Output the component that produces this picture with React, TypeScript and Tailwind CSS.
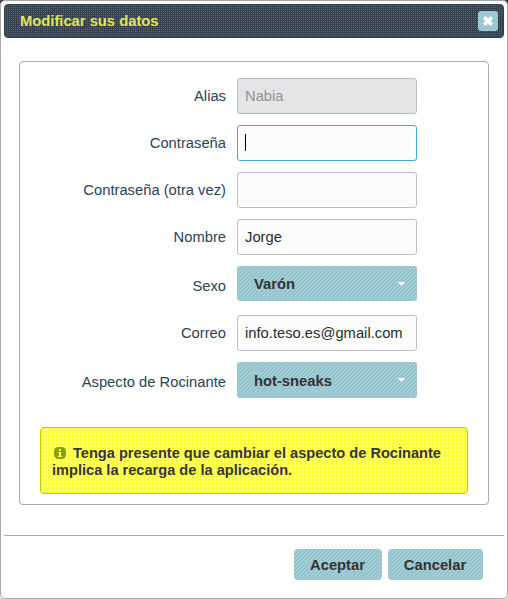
import type { ReactNode } from "react";

const STRIPES =
  "bg-[#93c3cd] bg-[linear-gradient(135deg,#93c3cd_44%,#b3d6dd_44%,#b3d6dd_56%,#93c3cd_56%)] bg-size-[4px_4px]";

function Row({
  label,
  className,
  labelClass = "",
  children,
}: {
  label: string;
  className: string;
  labelClass?: string;
  children: ReactNode;
}) {
  return (
    <div className={`flex items-center ${className}`}>
      <label className={`mr-[11px] w-[206px] shrink-0 text-right whitespace-nowrap text-[#2c4359] ${labelClass}`}>
        {label}
      </label>
      {children}
    </div>
  );
}

function Field({ value, kind = "normal" }: { value: string; kind?: "normal" | "disabled" | "focus" }) {
  const look =
    kind === "disabled"
      ? "border-[#b9bec2] bg-[#e4e5e7] text-[#929394]"
      : kind === "focus"
        ? "border-[#3baae3] bg-[#fcfcfc] text-[#2c2c2c]"
        : "border-[#bfbfbf] bg-[#fcfcfc] text-[#2c2c2c]";
  return (
    <div className={`flex h-9 w-[180px] items-center rounded-[3px] border pl-[7px] whitespace-nowrap ${look}`}>
      {kind === "focus" ? <span className="mb-px h-[17px] w-px bg-black" /> : value}
    </div>
  );
}

function Select({ value, className, textClass }: { value: string; className: string; textClass: string }) {
  return (
    <div
      className={`flex w-[180px] items-center justify-between rounded-[3px] pr-3 pl-[17px] font-bold text-[#333] ${STRIPES} ${className}`}
    >
      <span className={textClass}>{value}</span>
      <svg width="7" height="4" viewBox="0 0 7 4" shapeRendering="crispEdges" fill="#fff">
        <path d="M0 0h7v1H6v1H5v1H4v1H3V3H2V2H1V1H0z" />
      </svg>
    </div>
  );
}

export default function App() {
  return (
    <div className="h-[599px] w-[508px] bg-linear-to-b from-[#35414f] from-2% to-[#e4e6e8] to-5% font-['Liberation_Sans',Arial,sans-serif] text-[14.75px] leading-[17px]">
      <div className="flex h-full flex-col rounded-[5px] border border-[#aaaaaa] bg-white p-[3px]">
        <header className="flex h-[34px] shrink-0 items-center justify-between rounded-[4px] border border-[#2c4359] bg-[#35414f] bg-[radial-gradient(circle_at_0.5px_0.5px,#5d6772_0.5px,transparent_0.6px)] bg-size-[2px_2px] pr-[5px] pl-[15px] font-bold text-[#e1e463]">
          <h1>Modificar sus datos</h1>
          <button className={`flex size-5 items-center justify-center rounded-[3px] ${STRIPES}`}>
            <svg width="10" height="10" viewBox="0 0 10 10" fill="none" stroke="#fff" strokeWidth="3.4">
              <path d="M1.2 1.2l7.6 7.6M8.8 1.2L1.2 8.8" />
            </svg>
          </button>
        </header>

        <main className="mx-[15px] mt-[23px] h-[444px] shrink-0 rounded-[4px] border border-[#aaaaaa] pt-4">
          <Row label="Alias" className="h-9">
            <Field value="Nabia" kind="disabled" />
          </Row>
          <Row label="Contraseña" className="mt-[11px] h-9">
            <Field value="" kind="focus" />
          </Row>
          <Row label="Contraseña (otra vez)" className="mt-[11px] h-9">
            <Field value="" />
          </Row>
          <Row label="Nombre" className="mt-[11px] h-9">
            <Field value="Jorge" />
          </Row>
          <Row label="Sexo" className="mt-[11px] h-[38px]" labelClass="pt-0.5">
            <Select value="Varón" className="mb-[3px] h-[35px]" textClass="pt-px" />
          </Row>
          <Row label="Correo" className="mt-[11px] h-9">
            <Field value="info.teso.es@gmail.com" />
          </Row>
          <Row label="Aspecto de Rocinante" className="mt-[11px] h-[38px]" labelClass="pt-0.5">
            <Select value="hot-sneaks" className="mb-[2px] h-9" textClass="pt-0.5" />
          </Row>

          <div className="mx-5 mt-[27px] h-[67px] rounded-[4px] border border-[#b4d100] bg-[#ffff38] bg-[radial-gradient(circle_at_2px_2px,#ffff98_1px,transparent_1.3px)] bg-size-[4px_4px] pt-[16.5px] pl-[11px] text-[14.6px] font-bold text-[#363636]">
            <p>
              <svg className="mr-[7px] ml-[2px] inline-block align-[-1px]" width="12" height="12" viewBox="0 0 12 12">
                <rect width="12" height="12" rx="4.5" fill="#88a206" />
                <path d="M5 2h2v2H5zM4 5h3v4h1v1H4V9h1V6H4z" fill="#ffff60" />
              </svg>
              Tenga presente que cambiar el aspecto de Rocinante
              <br />
              implica la recarga de la aplicación.
            </p>
          </div>
        </main>

        <footer className="mt-[30px] flex justify-end gap-[6px] border-t border-[#aaaaaa] pt-[13px] pr-[21px] font-bold text-[#333]">
          <button className={`h-[31px] w-[88px] rounded-[4px] pt-px pr-px ${STRIPES}`}>Aceptar</button>
          <button className={`h-[31px] w-[95px] rounded-[4px] pt-px pr-px ${STRIPES}`}>Cancelar</button>
        </footer>
      </div>
    </div>
  );
}
